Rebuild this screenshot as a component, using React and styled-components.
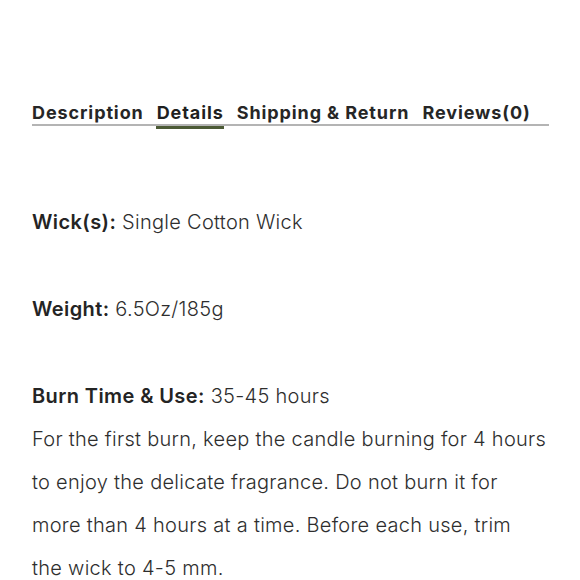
import React from "react";
import styled, { createGlobalStyle } from "styled-components";

const Global = createGlobalStyle`
  html, body { margin: 0; padding: 0; background: #fff; }
  body { font-family: Inter, "Liberation Sans", sans-serif; color: #2b2b2b; }
`;

const Page = styled.div`
  width: 580px;
  height: 580px;
  overflow: hidden;
  padding: 101px 32px 0 32px;
  box-sizing: border-box;
`;

const TabBar = styled.div`
  display: flex;
  gap: 13px;
  width: 517px;
  border-bottom: 2px solid #b4b4b4;
`;

const Tab = styled.div`
  position: relative;
  font-size: 18px;
  font-weight: 700;
  letter-spacing: 0.9px;
  line-height: 23px;
  color: ${(p) => (p.$active ? "#1f1f1f" : "#262626")};
  white-space: nowrap;
  &::after {
    content: "";
    display: ${(p) => (p.$active ? "block" : "none")};
    position: absolute;
    left: -1px;
    right: 0;
    bottom: -5px;
    height: 3px;
    background: #4b5a35;
  }
`;

const Details = styled.div`
  margin-top: 75px;
  display: flex;
  flex-direction: column;
  gap: 44px;
`;

const Block = styled.p`
  margin: 0;
  font-size: 20px;
  line-height: 43px;
  font-weight: 300;
  letter-spacing: 0.28px;
  color: #2e2e2e;
  white-space: nowrap;
`;

const Label = styled.span`
  font-weight: 600;
  letter-spacing: 0.4px;
  color: #242424;
`;

export default function App() {
  return (
    <>
      <Global />
      <Page>
        <TabBar>
          <Tab>Description</Tab>
          <Tab $active>Details</Tab>
          <Tab>Shipping &amp; Return</Tab>
          <Tab>Reviews(0)</Tab>
        </TabBar>
        <Details>
          <Block>
            <Label>Wick(s):</Label> Single Cotton Wick
          </Block>
          <Block>
            <Label>Weight:</Label> 6.5Oz/185g
          </Block>
          <Block>
            <Label>Burn Time &amp; Use:</Label> 35-45 hours
            <br />
            For the first burn, keep the candle burning for 4 hours
            <br />
            to enjoy the delicate fragrance. Do not burn it for
            <br />
            more than 4 hours at a time. Before each use, trim
            <br />
            the wick to 4-5 mm.
          </Block>
        </Details>
      </Page>
    </>
  );
}
